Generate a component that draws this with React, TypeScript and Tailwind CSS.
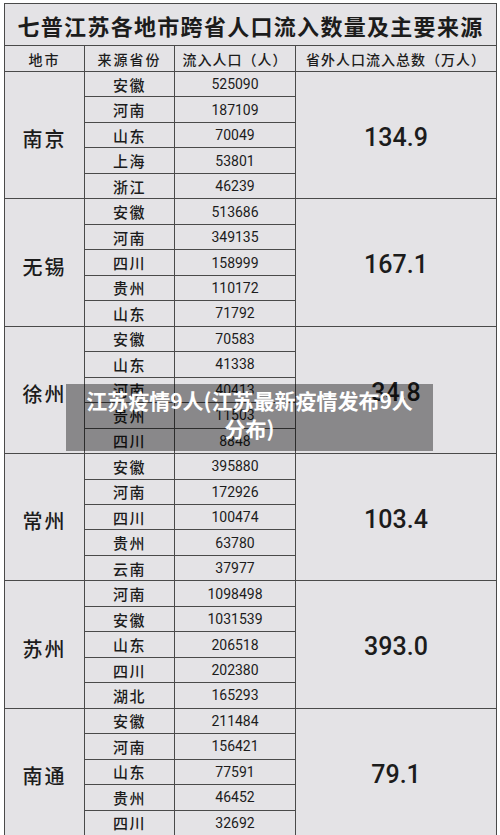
import React from 'react';

type Group = { city: string; total: string; rows: [string, string][] };

// 七普 cross-province inflow by city, top five source provinces each.
const GROUPS: Group[] = [
  { city: '南京', total: '134.9', rows: [['安徽', '525090'], ['河南', '187109'], ['山东', '70049'], ['上海', '53801'], ['浙江', '46239']] },
  { city: '无锡', total: '167.1', rows: [['安徽', '513686'], ['河南', '349135'], ['四川', '158999'], ['贵州', '110172'], ['山东', '71792']] },
  { city: '徐州', total: '34.8', rows: [['安徽', '70583'], ['山东', '41338'], ['河南', '40413'], ['贵州', '11503'], ['四川', '8848']] },
  { city: '常州', total: '103.4', rows: [['安徽', '395880'], ['河南', '172926'], ['四川', '100474'], ['贵州', '63780'], ['云南', '37977']] },
  { city: '苏州', total: '393.0', rows: [['河南', '1098498'], ['安徽', '1031539'], ['山东', '206518'], ['四川', '202380'], ['湖北', '165293']] },
  { city: '南通', total: '79.1', rows: [['安徽', '211484'], ['河南', '156421'], ['山东', '77591'], ['贵州', '46452'], ['四川', '32692']] },
];

const CJK = "font-['Noto_Sans_CJK_SC',sans-serif]";
const NUM = "font-['Roboto','Noto_Sans_CJK_SC',sans-serif]";
const cell = 'border border-[#4a4a4a] text-center align-middle p-0';

export default function App() {
  return (
    <div className="relative w-[500px] h-[835px] overflow-hidden bg-white pl-[4px] pt-[3px]">
      <table className="table-fixed border-collapse w-[492px] bg-[#e4e3e6] text-[#1c1c1c]">
        <colgroup>
          <col className="w-[80px]" />
          <col className="w-[90px]" />
          <col className="w-[121px]" />
          <col className="w-[201px]" />
        </colgroup>
        <tbody>
          <tr>
            <td colSpan={4} className={`${cell} h-[42px] ${CJK} text-[22px] font-bold tracking-[1.3px] leading-none`}>
              七普江苏各地市跨省人口流入数量及主要来源
            </td>
          </tr>
          <tr className={`${CJK} text-[14px] font-medium leading-none`}>
            <td className={`${cell} h-[26px] tracking-[2px]`}>地市</td>
            <td className={`${cell} tracking-[2px]`}>来源省份</td>
            <td className={`${cell} tracking-[1px]`}>流入人口（人）</td>
            <td className={`${cell} tracking-[1px]`}>省外人口流入总数（万人）</td>
          </tr>
          {GROUPS.map((g) =>
            g.rows.map(([prov, num], i) => (
              <tr key={g.city + prov} className="h-[25.47px]">
                {i === 0 && (
                  <td rowSpan={5} className={`${cell} ${CJK} text-[20px] font-medium tracking-[2px] pt-[8px]`}>
                    {g.city}
                  </td>
                )}
                <td className={`${cell} ${CJK} text-[15px] font-medium tracking-[1.5px] leading-none`}>{prov}</td>
                <td className={`${cell} ${NUM} text-[14px] leading-none`}>{num}</td>
                {i === 0 && (
                  <td rowSpan={5} className={`${cell} ${NUM} text-[25px] font-medium pt-[5px]`}>
                    {g.total}
                  </td>
                )}
              </tr>
            ))
          )}
        </tbody>
      </table>

      {/* caption banner over the table */}
      <div className="absolute left-[66px] top-[384px] w-[367px] h-[67px] bg-black/40 px-4 pt-[2px] text-center text-white font-bold text-[21px] leading-[28px] font-['Noto_Sans_CJK_SC',sans-serif]">
        江苏疫情9人(江苏最新疫情发布9人分布)
      </div>
    </div>
  );
}
